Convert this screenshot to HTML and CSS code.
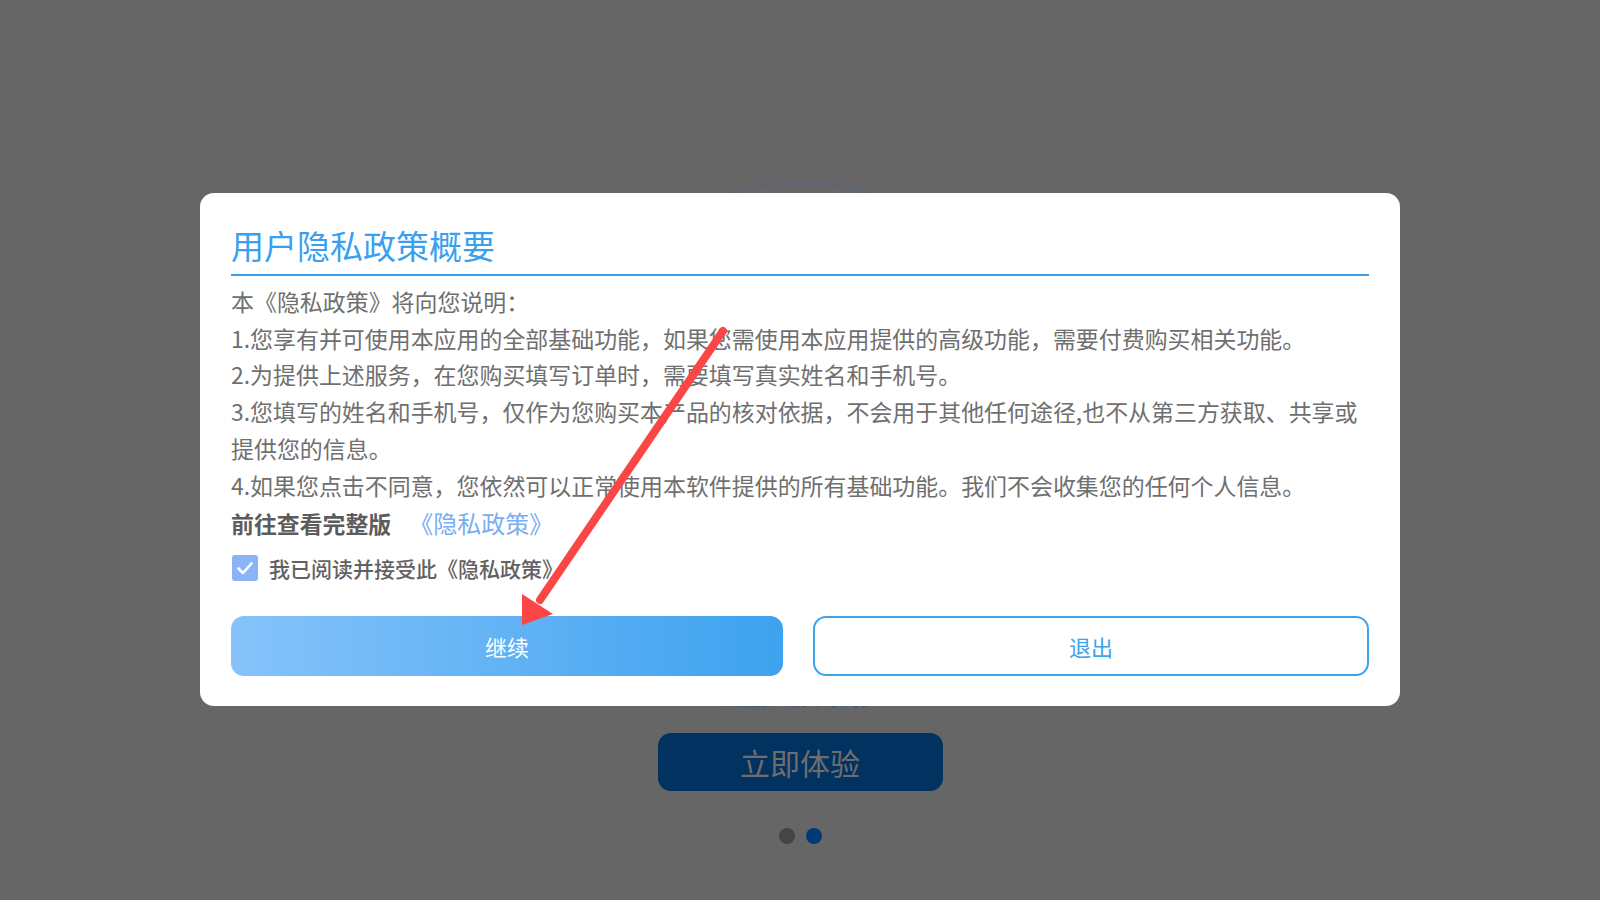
FILE: index.html
```html
<!DOCTYPE html>
<html lang="zh-CN">
    <head>
        <meta charset="UTF-8" />
        <title>用户隐私政策概要</title>
        <link rel="stylesheet" href="styles.css">
    </head>

    <body>
        <div class="screen">
            <div class="logo-ring"></div>
            <div class="slogan">数据多端实时同步</div>
            <button class="start-button">立即体验</button>
            <div class="dots">
                <span class="dot"></span>
                <span class="dot active"></span>
            </div>
        </div>

        <div class="dialog">
            <h1 class="dialog-title">用户隐私政策概要</h1>
            <div class="dialog-body">
                <p>本《隐私政策》将向您说明：</p>
                <p>1.您享有并可使用本应用的全部基础功能，如果您需使用本应用提供的高级功能，需要付费购买相关功能。</p>
                <p>2.为提供上述服务，在您购买填写订单时，需要填写真实姓名和手机号。</p>
                <p>3.您填写的姓名和手机号，仅作为您购买本产品的核对依据，不会用于其他任何途径,也不从第三方获取、共享或提供您的信息。</p>
                <p>4.如果您点击不同意，您依然可以正常使用本软件提供的所有基础功能。我们不会收集您的任何个人信息。</p>
            </div>
            <div class="full-link">前往查看完整版<a href="#">《隐私政策》</a></div>
            <label class="agree">
                <span class="checkbox">
                    <svg width="20" height="20" viewBox="0 0 20 20">
                        <path d="M3.5 10.5 L8 15 L16.5 5.5" fill="none" stroke="#fff" stroke-width="2.6" stroke-linecap="round" stroke-linejoin="round" />
                    </svg>
                </span>
                我已阅读并接受此《隐私政策》
            </label>
            <div class="actions">
                <button class="btn btn-primary">继续</button>
                <button class="btn btn-outline">退出</button>
            </div>
        </div>

        <svg class="arrow" width="1600" height="900" viewBox="0 0 1600 900">
            <line x1="723" y1="331" x2="540" y2="600" stroke="#fb4646" stroke-width="8" stroke-linecap="round" />
            <polygon points="522,625 522,594 553,614" fill="#fb4646" />
        </svg>
    </body>
</html>
```

FILE: styles.css
```css
html, body {
    margin: 0;
    height: 100%;
}

body {
    background: #666666;
    font-family: "Noto Sans CJK SC", "Noto Sans", sans-serif;
    overflow: hidden;
}

/* background screen, dimmed */
.screen {
    display: flex;
    flex-direction: column;
    align-items: center;
    padding-top: 181px;
}

.logo-ring {
    width: 420px;
    height: 420px;
    border-radius: 50%;
    border: 2px solid #5a6673;
    box-sizing: border-box;
}

.slogan {
    margin-top: 82px;
    font-size: 20px;
    line-height: 30px;
    color: #3d5a80;
}

.start-button {
    margin-top: 20px;
    width: 285px;
    height: 58px;
    border: none;
    border-radius: 13px;
    background: #02325f;
    color: #6e6e6e;
    font-family: inherit;
    font-size: 30px;
}

.dots {
    display: flex;
    gap: 11px;
    margin-top: 37px;
}

.dot {
    width: 16px;
    height: 16px;
    border-radius: 50%;
    background: #454545;
}

.dot.active {
    background: #023a78;
}

/* dialog */
.dialog {
    position: fixed;
    left: 200px;
    top: 193px;
    width: 1200px;
    box-sizing: border-box;
    padding: 36px 31px 30px;
    background: #fff;
    border-radius: 14px;
    display: flex;
    flex-direction: column;
}

.dialog-title {
    margin: 0;
    padding-bottom: 12px;
    border-bottom: 2px solid #3b9ff0;
    font-size: 33px;
    line-height: 33px;
    font-weight: normal;
    color: #3b9ff0;
}

.dialog-body {
    margin-top: 7px;
    font-size: 22.95px;
    line-height: 36.7px;
    color: #6f6f6f;
}

.dialog-body p {
    margin: 0;
}

.full-link {
    margin-top: 2px;
    font-size: 22.9px;
    line-height: 36.7px;
    font-weight: bold;
    color: #5c5c5c;
}

.full-link a {
    margin-left: 18px;
    font-size: 24px;
    font-weight: normal;
    color: #79aef2;
    text-decoration: none;
}

.agree {
    display: flex;
    align-items: center;
    gap: 11px;
    margin-top: 13px;
    padding-left: 1px;
    font-size: 21px;
    line-height: 26px;
    font-weight: 500;
    color: #626262;
}

.checkbox {
    width: 26px;
    height: 26px;
    border-radius: 3px;
    background: #8ab4f8;
    display: flex;
    align-items: center;
    justify-content: center;
}

.actions {
    display: flex;
    gap: 30px;
    margin-top: 35px;
}

.btn {
    flex: 1;
    height: 60px;
    border-radius: 13px;
    font-family: inherit;
    font-size: 22px;
}

.btn-primary {
    border: none;
    background: linear-gradient(to right, #86c3fa, #3da2ef);
    color: #fff;
}

.btn-outline {
    border: 2px solid #3ea3ef;
    background: #fff;
    color: #3ea3ef;
}

.arrow {
    position: fixed;
    left: 0;
    top: 0;
    pointer-events: none;
}
```
